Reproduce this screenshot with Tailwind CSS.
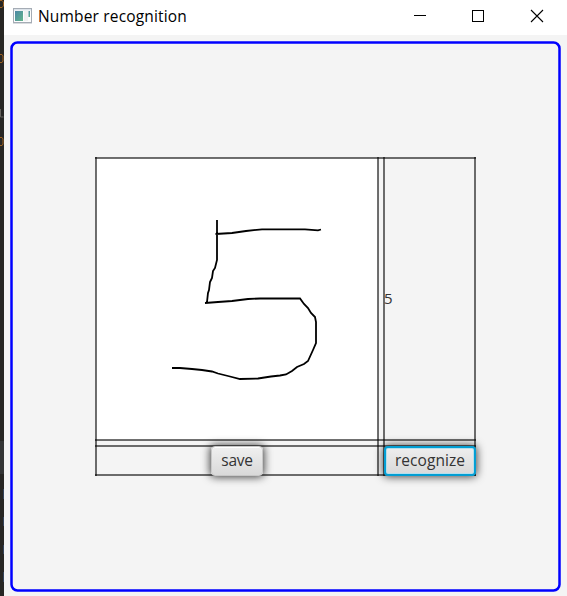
<!DOCTYPE html>
<html lang="en">
<head>
<meta charset="utf-8">
<title>Number recognition</title>
<script src="https://cdn.jsdelivr.net/npm/@tailwindcss/browser@4"></script>
</head>
<body class="w-[567px] h-[596px] overflow-hidden bg-[#f4f4f4] font-['Open_Sans','Noto_Sans',sans-serif]">
<div class="flex w-[567px] h-[596px]">
  <!-- sliver of the editor behind the window -->
  <svg class="shrink-0" width="4" height="596" viewBox="0 0 4 596" fill="none">
    <rect width="4" height="596" fill="#272624"/>
    <rect y="441" width="4" height="33" fill="#343536"/>
    <path d="M0 .5H2L3.500 2V6L2 7.500H0M0 54.500H2L3 56V61L2 62.500H0M0 137.500H2L3 139V144L2 145.500H0" stroke="#9c6020"/>
    <path d="M.5 109V117H3.500" stroke="#65625d"/>
    <path d="M3.500 489V499M3.500 517V526M3.500 545V554M3.500 572V582" stroke="#34435a"/>
  </svg>
  <main class="flex flex-col w-[563px]">
    <header class="flex items-center h-[35px] bg-white pl-[9px]">
      <svg class="shrink-0 -mt-[3px]" width="20" height="16" viewBox="0 0 20 16">
        <defs><linearGradient id="g" x1="0" y1="0" x2="1" y2="1"><stop stop-color="#4c87a5"/><stop offset="1" stop-color="#62b58c"/></linearGradient></defs>
        <rect x=".5" y=".5" width="18" height="14" fill="#fdfdfd" stroke="#a5acb5"/>
        <rect x="1" y="1" width="17" height="1.500" fill="#dce3ea"/>
        <rect x="2" y="3" width="8" height="10" fill="url(#g)"/>
        <rect x="11" y="3" width="4" height="10" fill="#f0f1f2"/>
        <rect x="15.500" y="3" width="1.500" height="6" fill="url(#g)"/>
        <path d="M0 15.500H19" stroke="#d9dcdf"/>
      </svg>
      <h1 class="ml-[5px] w-[160px] text-[15.500px] leading-5 tracking-[0.17px] text-black whitespace-nowrap -mt-[3px]">Number recognition</h1>
      <svg class="ml-auto shrink-0" width="155" height="35" viewBox="0 0 155 35" fill="none" stroke="#000">
        <path d="M2 15.500H14"/>
        <rect x="60.500" y="10.500" width="11" height="11"/>
        <path d="M119 10L131 22M131 10L119 22" stroke-width="1.100"/>
      </svg>
    </header>
    <section class="relative h-[561px] pl-[92px] pt-[123px]">
      <svg class="absolute left-0 top-0" width="563" height="561" viewBox="0 0 563 561" fill="none">
        <rect x="7.500" y="7.500" width="548" height="548" rx="6" stroke="#00f" stroke-width="2.500"/>
      </svg>
      <div class="relative grid grid-cols-[282px_92px] grid-rows-[282px_30px] gap-[6px] w-[380px]">
        <svg class="bg-white" width="282" height="282" viewBox="96 158 282 282" fill="none" stroke="#000" stroke-width="1.800">
          <path d="M217 220V260L215 268L213 271L212 278L210 282L209 290L208 293L207 302M205 303L218 302L232 301L248 299L260 298.500H300L304 304L308 308L311 313L315 317L316 322V343L313 350L308 361L304 364L297 367L292 371L286 374.500L280 375.500L271 376.500L258 378.500L240 379L230 376.500L218 373.500L212 371.500L202 370L192 369L180 368H172M215.500 234L232 233L246 231L262 229.300H305L318 230.300L321 229.500"/>
        </svg>
        <div class="flex items-center text-[15px] leading-5 tracking-tight text-[#333]"><span class="relative -mt-[3px]">5</span></div>
        <svg class="absolute -left-px -top-px" width="381" height="319" viewBox="0 0 381 319" stroke="#000" stroke-opacity=".56" stroke-width="2">
          <path d="M0 1H381"/><path d="M0 283H381"/><path d="M0 289H381"/><path d="M0 318H381"/>
          <path d="M1 0V319"/><path d="M283 0V319"/><path d="M289 0V319"/><path d="M380 0V319"/>
        </svg>
        <div class="relative flex justify-center">
          <button class="w-[52px] h-[30px] rounded-[4px] border border-[#c8c8c8] bg-linear-to-b from-[#f0f0f0] to-[#d9d9d9] shadow-[0_0_8px_1px_rgba(0,0,0,0.75),inset_0_1px_0_#fff] text-[15.500px] leading-[27px] pb-px tracking-[-0.25px] text-[#333]">save</button>
        </div>
        <button class="relative w-[92px] h-[30px] rounded-[4px] border-2 border-[#039ed3] bg-linear-to-b from-[#eeeeee] to-[#d9d9d9] shadow-[0_0_8px_1px_rgba(0,0,0,0.7),inset_0_0_0_1px_#b5dfed] text-[15.500px] leading-[25px] pb-px tracking-[0.05px] whitespace-nowrap text-[#333]">recognize</button>
      </div>
    </section>
  </main>
</div>
</body>
</html>
